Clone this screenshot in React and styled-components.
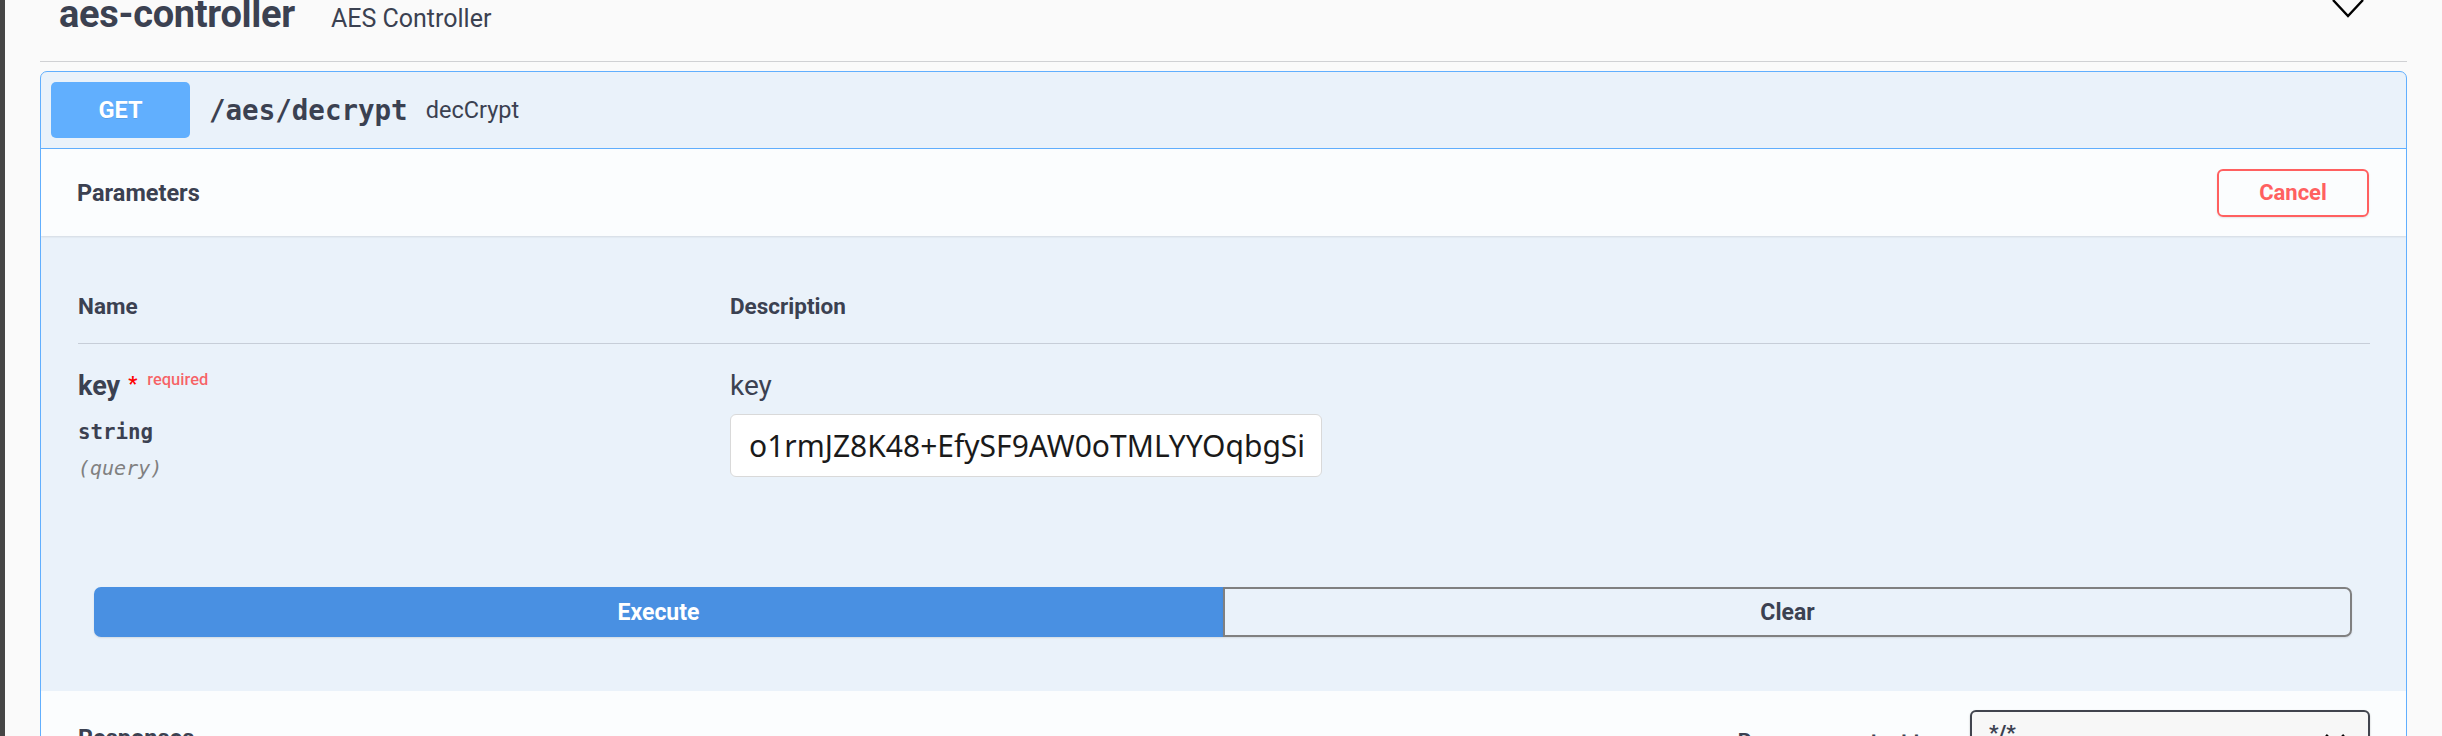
import React from 'react'
import styled, { createGlobalStyle } from 'styled-components'

const GlobalStyle = createGlobalStyle`
  html, body {
    margin: 0;
    padding: 0;
    background: #fafafa;
    overflow: hidden;
  }
  body {
    font-family: Roboto, "Noto Sans", sans-serif;
    color: #3b4151;
  }
  * { box-sizing: border-box; }
`

const Page = styled.div`
  min-height: 100vh;
  border-left: 5px solid #454545;
  padding: 0 35px;
`

const TagHeader = styled.div`
  display: flex;
  align-items: baseline;
  height: 62px;
  padding-left: 19px;
  border-bottom: 1px solid #d0d1d4;
`

const TagTitle = styled.span`
  font-size: 38px;
  line-height: 1;
  font-weight: 700;
  margin-top: -5px;
  letter-spacing: -0.3px;
`

const TagDesc = styled.span`
  font-size: 25px;
  line-height: 1;
  margin-left: 36px;
`

const Chevron = styled.svg`
  align-self: flex-start;
  margin-left: auto;
  margin-right: 43px;
  width: 32px;
  height: 18px;
`

const Opblock = styled.div`
  margin-top: 9px;
  border: 1px solid #61affe;
  border-radius: 7px;
  background: rgba(97, 175, 254, 0.1);
  overflow: hidden;
`

const Summary = styled.div`
  display: flex;
  align-items: center;
  padding: 10px 10px;
  border-bottom: 1px solid #61affe;
`

const Method = styled.span`
  display: flex;
  align-items: center;
  justify-content: center;
  width: 139px;
  height: 56px;
  border-radius: 5px;
  background: #61affe;
  color: #fff;
  font-size: 23.5px;
  font-weight: 700;
  text-shadow: 0 1px 0 rgba(0, 0, 0, 0.1);
  margin-right: 19px;
`

const Path = styled.span`
  font-family: "DejaVu Sans Mono", monospace;
  font-size: 27.5px;
  font-weight: 600;
  margin-right: 18px;
`

const OpSummary = styled.span`
  font-size: 23.5px;
`

const SectionHeader = styled.div`
  display: flex;
  align-items: center;
  justify-content: space-between;
  height: 87px;
  padding: 0 37px 0 36px;
  background: rgba(255, 255, 255, 0.8);
  box-shadow: 0 1px 2px rgba(0, 0, 0, 0.1);
`

const SectionTitle = styled.h4`
  margin: 0;
  font-size: 23.5px;
  font-weight: 700;
`

const OutlineButton = styled.button`
  width: 152px;
  height: 48px;
  border: 2px solid ${(p) => p.color};
  border-radius: 6px;
  background: transparent;
  color: ${(p) => p.color};
  font-family: Roboto, sans-serif;
  font-size: 22px;
  font-weight: 700;
  box-shadow: 0 1px 2px rgba(0, 0, 0, 0.1);
`

const ParamsBody = styled.div`
  padding: 50px 36px 0 37px;
`

const ParamGrid = styled.div`
  display: grid;
  grid-template-columns: 652px 1fr;
`

const HeadCell = styled.div`
  font-size: 22.5px;
  font-weight: 700;
  line-height: 40px;
  padding-bottom: 17px;
  border-bottom: 1px solid rgba(59, 65, 81, 0.2);
`

const Cell = styled.div`
  padding-top: 26px;
  display: flex;
  flex-direction: column;
  align-items: flex-start;
`

const ParamName = styled.div`
  font-size: 27px;
  line-height: 32px;
  font-weight: 700;
  display: flex;
  align-items: flex-start;
`

const Star = styled.span`
  color: red;
  font-size: 20px;
  line-height: 1;
  margin: 4px 0 0 8px;
`

const Required = styled.span`
  color: rgba(255, 0, 0, 0.6);
  font-size: 16.5px;
  font-weight: 500;
  line-height: 1;
  margin: 2px 0 0 10px;
`

const Mono = styled.div`
  font-family: "DejaVu Sans Mono", monospace;
  font-size: ${(p) => (p.italic ? '20px' : '20.8px')};
  font-weight: ${(p) => (p.italic ? 400 : 600)};
  font-style: ${(p) => (p.italic ? 'italic' : 'normal')};
  color: ${(p) => (p.italic ? '#808080' : '#3b4151')};
  line-height: 28px;
  margin-top: ${(p) => (p.italic ? '8px' : '16px')};
`

const DescText = styled.div`
  font-size: 28px;
  line-height: 32px;
`

const KeyInput = styled.input`
  margin-top: 12px;
  width: 592px;
  height: 63px;
  padding: 0 18px;
  border: 1px solid #d9d9d9;
  border-radius: 6px;
  background: #fff;
  font-family: "Noto Sans", sans-serif;
  font-size: 30px;
  color: #1a1a1a;
  outline: none;
`

const ExecuteWrapper = styled.div`
  display: flex;
  padding: 105px 54px 54px 53px;
`

const GroupButton = styled.button`
  flex: 1;
  height: 50px;
  font-family: Roboto, sans-serif;
  font-size: 23px;
  font-weight: 700;
  border: 2px solid ${(p) => (p.primary ? '#4990e2' : '#808080')};
  background: ${(p) => (p.primary ? '#4990e2' : 'transparent')};
  color: ${(p) => (p.primary ? '#fff' : '#3b4151')};
  border-radius: ${(p) => (p.primary ? '7px 0 0 7px' : '0 7px 7px 0')};
  box-shadow: 0 1px 2px rgba(0, 0, 0, 0.1);
`

const Responses = styled.div`
  display: flex;
  align-items: flex-start;
  padding: 19px 36px 40px 37px;
  background: rgba(255, 255, 255, 0.8);
`

const ResponsesTitle = styled.h4`
  margin: 0;
  padding-top: 14px;
  font-size: 23.5px;
  line-height: 28px;
  font-weight: 700;
`

const ContentTypeLabel = styled.span`
  margin-left: auto;
  padding-top: 17px;
  font-size: 21px;
  line-height: 28px;
  font-weight: 700;
  margin-right: 16px;
`

const Select = styled.div`
  width: 400px;
  height: 64px;
  display: flex;
  align-items: flex-start;
  justify-content: space-between;
  padding: 9px 22px 0 17px;
  border: 2px solid #41444e;
  border-radius: 6px;
  background: #f7f7f7;
  font-size: 21px;
  line-height: 24px;
  font-weight: 700;
  box-shadow: 0 1px 2px rgba(0, 0, 0, 0.25);

  svg {
    margin-top: 12px;
  }
`

function App() {
  return (
    <>
      <GlobalStyle />
      <Page>
        <TagHeader>
          <TagTitle>aes-controller</TagTitle>
          <TagDesc>AES Controller</TagDesc>
          <Chevron viewBox="0 0 32 18">
            <polyline points="1,0 16,16 31,0" fill="none" stroke="#000" strokeWidth="2.4" />
          </Chevron>
        </TagHeader>

        <Opblock>
          <Summary>
            <Method>GET</Method>
            <Path>/aes/decrypt</Path>
            <OpSummary>decCrypt</OpSummary>
          </Summary>

          <SectionHeader>
            <SectionTitle>Parameters</SectionTitle>
            <OutlineButton color="#ff6060">Cancel</OutlineButton>
          </SectionHeader>

          <ParamsBody>
            <ParamGrid>
              <HeadCell>Name</HeadCell>
              <HeadCell>Description</HeadCell>
              <Cell>
                <ParamName>
                  key
                  <Star>*</Star>
                  <Required>required</Required>
                </ParamName>
                <Mono>string</Mono>
                <Mono italic>(query)</Mono>
              </Cell>
              <Cell>
                <DescText>key</DescText>
                <KeyInput defaultValue="o1rmJZ8K48+EfySF9AW0oTMLYYOqbgSi" />
              </Cell>
            </ParamGrid>
          </ParamsBody>

          <ExecuteWrapper>
            <GroupButton primary>Execute</GroupButton>
            <GroupButton>Clear</GroupButton>
          </ExecuteWrapper>

          <Responses>
            <ResponsesTitle>Responses</ResponsesTitle>
            <ContentTypeLabel>Response content type</ContentTypeLabel>
            <Select>
              <span>*/*</span>
              <svg width="22" height="14" viewBox="0 0 22 14">
                <polyline points="2,2 11,11 20,2" fill="none" stroke="#000" strokeWidth="2.5" />
              </svg>
            </Select>
          </Responses>
        </Opblock>
      </Page>
    </>
  )
}

export default App
